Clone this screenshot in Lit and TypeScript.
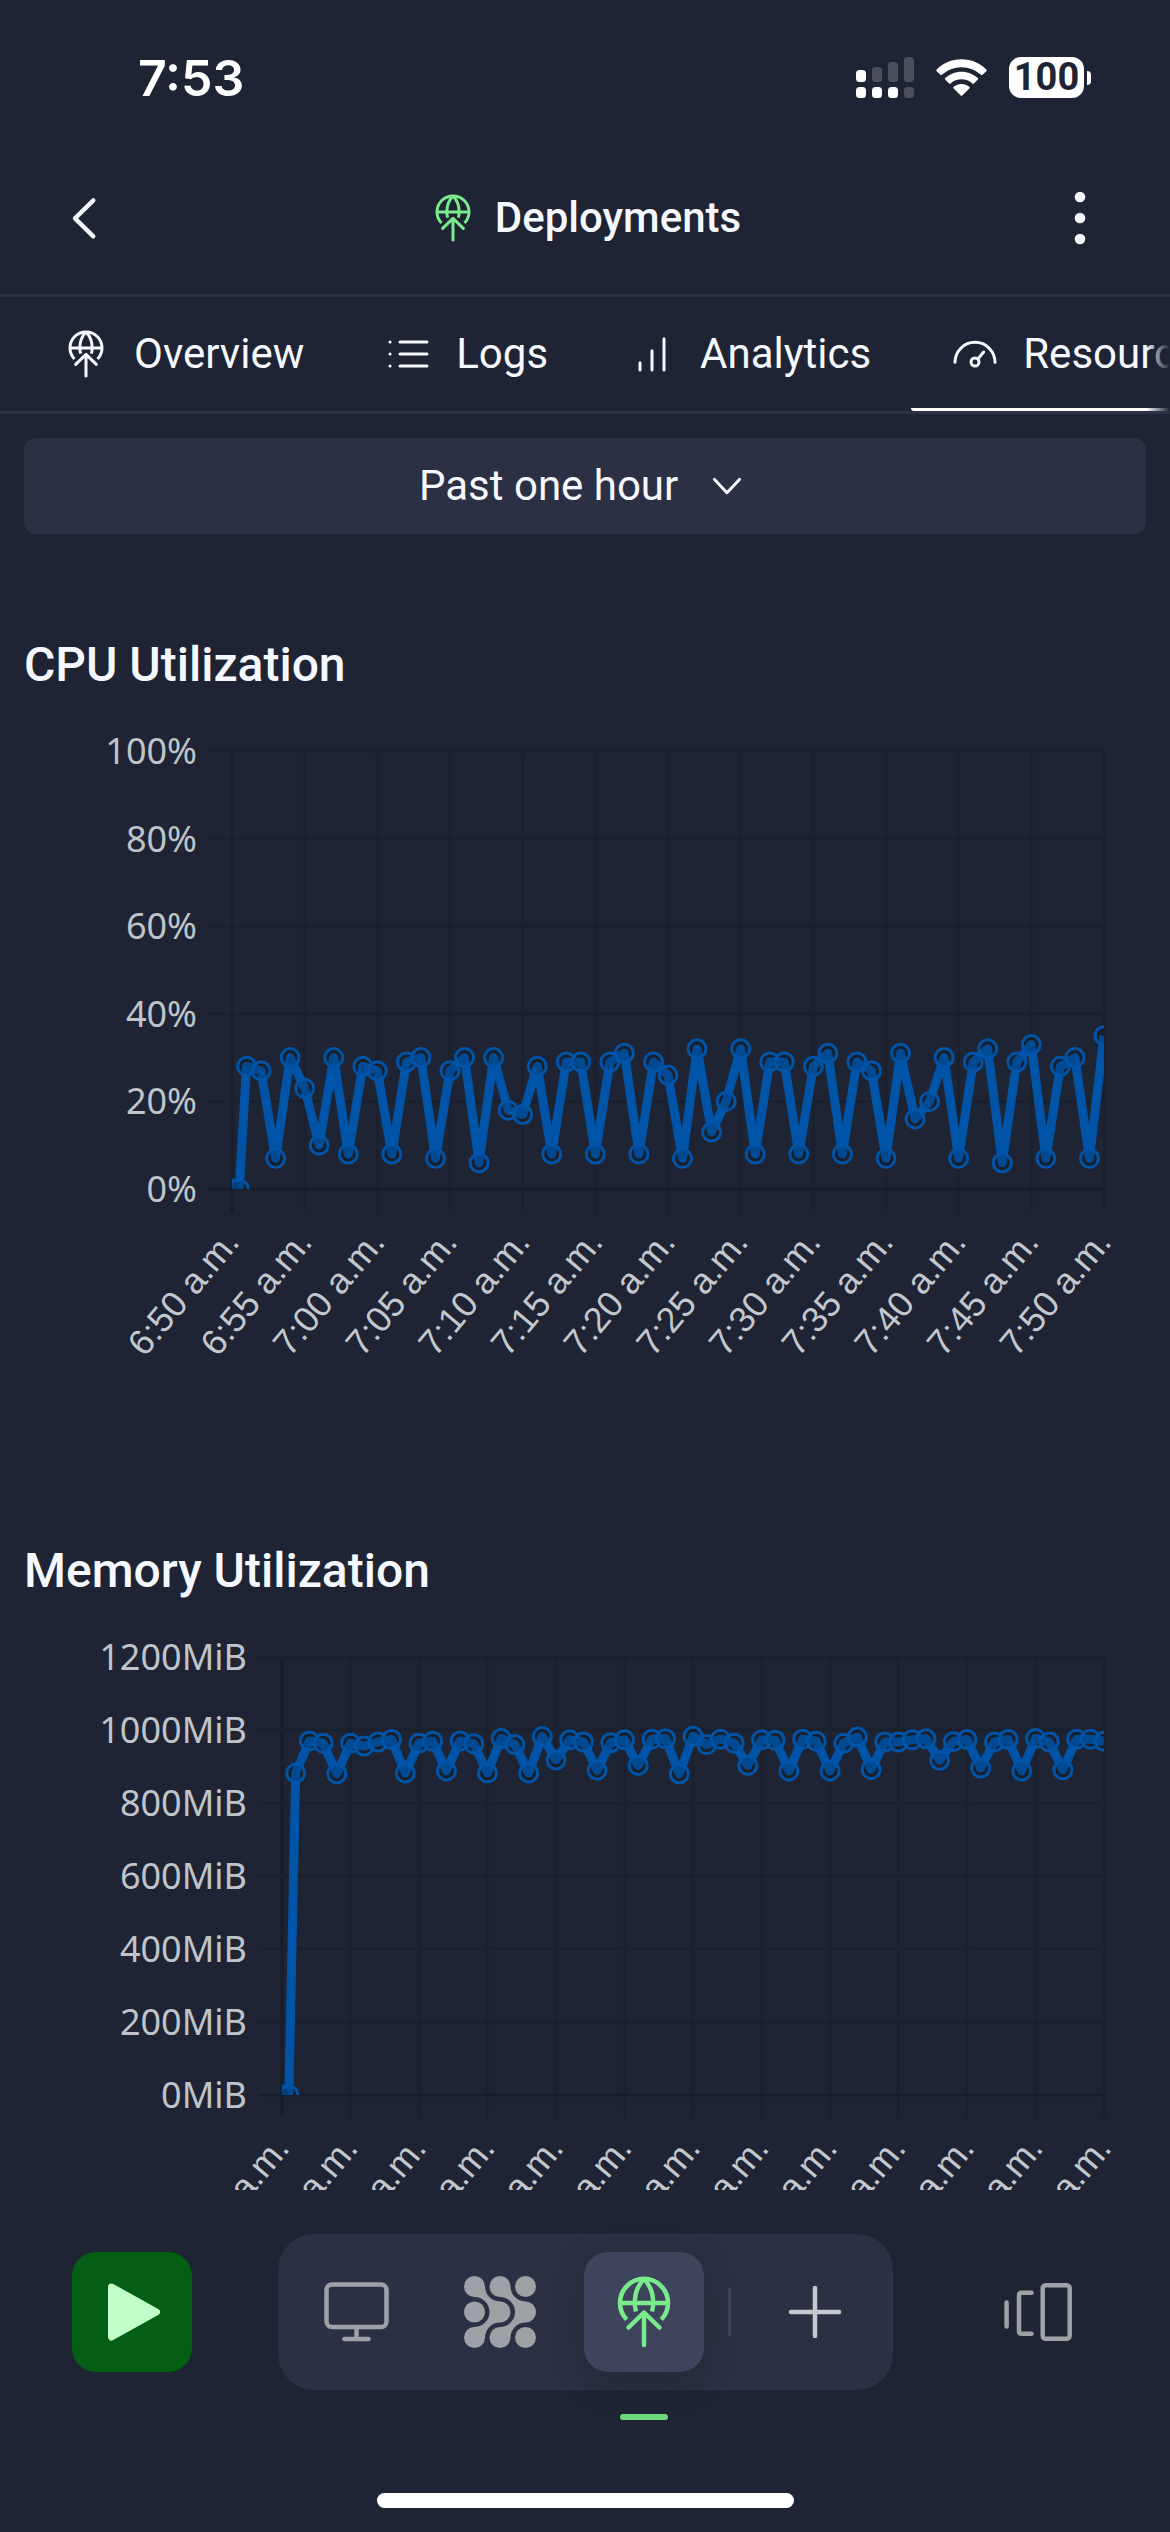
import { LitElement, html, svg, css } from "lit";
import { customElement, property, state } from "lit/decorators.js";
import { classMap } from "lit/directives/class-map.js";

const globeArrow = svg`
  <path d="M18.7 43.5A24 24 0 1 1 53.3 43.5M12 27H60" stroke-linecap="butt"></path>
  <path d="M36 3C30 9 26.8 18 26.8 27Q26.8 31 28 35.500M36 3C42 9 45.200 18 45.200 27Q45.200 31 44 35.500" stroke-linecap="butt"></path>
  <path d="M20.500 51.500L36 36.500L51.500 51.500M36 37V69"></path>`;

const icons = {
  globe: globeArrow,
  list: svg`
    <path d="M24 18H64.500M24 36H64.500M24 54H64.500M9 18h.1M9 36h.1M9 54h.1"></path>`,
  bars: svg`<path d="M18 49V60M36 31V60M54 13V60"></path>`,
  gauge: svg`
    <path d="M6 48.500A30 30 0 0 1 66 48.500"></path>
    <circle cx="36" cy="48" r="6"></circle>
    <path d="M40.500 43L49 33"></path>`,
  monitor: svg`
    <rect x="6.500" y="8.500" width="60" height="42.500" rx="5.500"></rect>
    <path d="M36.500 51V62M24.500 63H48.500"></path>`,
  nodes: svg`
    <g fill="currentColor" stroke="none">
      <path d="M21 10.500A15 15 0 0 0 36 25.500A10.500 10.500 0 0 1 36 46.500A15 15 0 0 0 21 61.500A10.500 10.500 0 1 1 10.500 51A15 15 0 0 0 10.500 21A10.500 10.500 0 1 1 21 10.500Z"></path>
      <path d="M46.500 10.500A15 15 0 0 0 61.500 25.500A10.500 10.500 0 0 1 61.500 46.500A15 15 0 0 0 46.500 61.500A10.500 10.500 0 1 1 36 51A15 15 0 0 0 36 21A10.500 10.500 0 1 1 46.500 10.500Z"></path>
      <circle cx="10.500" cy="36" r="10.500"></circle>
      <circle cx="61.500" cy="10.500" r="10.500"></circle>
      <circle cx="61.500" cy="61.500" r="10.500"></circle>
    </g>`,
  plus: svg`<path d="M36 12V60M12 36H60"></path>`,
  windows: svg`
    <path d="M4.600 26.500V50.500M29.500 16.700H19.500Q17 16.700 17 19.200V55.200Q17 57.700 19.500 57.700H29.500"></path>
    <rect x="40.700" y="9.200" width="27" height="53.600" rx="3"></rect>`,
  play: svg`
    <path d="M15.500 11L60.500 36L15.500 61Z" fill="currentColor" stroke-width="7"></path>`,
  back: svg`<path d="M41 9.500L13.500 36.500L41 63.500" stroke-width="6.500"></path>`,
  dots: svg`
    <g fill="currentColor" stroke="none">
      <circle cx="36" cy="4.500" r="8"></circle>
      <circle cx="36" cy="36" r="8"></circle>
      <circle cx="36" cy="67.500" r="8"></circle>
    </g>`,
  chevron: svg`<path d="M17 26L36 46L55 26"></path>`,
};
type IconName = keyof typeof icons;

const icon = (name: IconName, size = "") => html`
  <svg class="icon ${size}" viewBox="0 0 72 72" aria-hidden="true">${icons[name]}</svg>`;

interface Sample {
  minute: number;
  value: number;
}

// The first half-minute reports nothing; afterwards there is one sample a minute.
const series = (values: number[]): Sample[] => [
  { minute: 0, value: 0 },
  { minute: 0.5, value: 0 },
  ...values.map((value, i) => ({ minute: i + 1, value })),
];

const CPU = series([
  28, 27, 7, 30, 23, 10, 30, 8, 28, 27, 8, 29, 30, 7, 27, 30, 6, 30, 18, 17,
  28, 8, 29, 29, 8, 29, 31, 8, 29, 26, 7, 32, 13, 20, 32, 8, 29, 29, 8, 28,
  31, 8, 29, 27, 7, 31, 16, 20, 30, 7, 29, 32, 6, 29, 33, 7, 28, 30, 7, 35,
]);

const MEMORY = series([
  882, 970, 964, 880, 964, 956, 967, 974, 882, 964, 969, 888, 970, 962, 882,
  977, 960, 882, 982, 918, 973, 967, 890, 965, 973, 903, 975, 976, 880, 983,
  960, 975, 964, 903, 973, 972, 888, 975, 969, 888, 964, 981, 892, 967, 967,
  973, 976, 917, 968, 974, 896, 967, 974, 888, 977, 967, 891, 975, 975, 969,
]);

const timeLabel = (minute: number) => {
  const total = 6 * 60 + 50 + minute;
  return `${Math.floor(total / 60)}:${String(total % 60).padStart(2, "0")} a.m.`;
};

@customElement("usage-chart")
class UsageChart extends LitElement {
  @property({ attribute: false }) samples: Sample[] = [];
  @property({ type: Number }) max = 100;
  @property({ type: Number }) step = 20;
  @property({ type: Number }) left = 232;
  @property() unit = "%";
  @property() label = "";

  static styles = css`
    :host {
      display: block;
    }
    .chart {
      display: block;
      width: 100%;
      overflow: visible;
    }
    .grid {
      stroke: #1a202e;
      stroke-width: 3;
    }
    .axis {
      stroke: #171d2a;
      stroke-width: 3;
    }
    .line {
      fill: none;
      stroke: #0054a8;
      stroke-width: 9;
      stroke-linejoin: round;
    }
    .point {
      fill: rgba(0, 0, 0, 0.12);
      stroke: #0054a8;
      stroke-width: 3;
    }
    .value {
      fill: #bfc4c9;
      font: 36px "Noto Sans", sans-serif;
      text-anchor: end;
    }
    .time {
      fill: #c3c8cc;
      font: 36px "Liberation Sans", Arial, sans-serif;
      text-anchor: end;
    }
  `;

  render() {
    const top = 56;
    const bottom = 494;
    const right = 1104;
    const x = (m: number) => this.left + ((right - this.left) * m) / 60;
    const y = (v: number) => bottom - ((bottom - top) * v) / this.max;
    const rows = Array.from({ length: this.max / this.step + 1 }, (_, i) => i * this.step);
    const columns = Array.from({ length: 13 }, (_, i) => i * 5);
    const path = this.samples.map((s) => `${x(s.minute)},${y(s.value)}`).join(" ");
    return html`
      <svg class="chart" viewBox="0 0 1170 700" role="img" aria-label=${this.label}>
        <clipPath id="area">
          <rect x=${this.left} y="0" width=${right - this.left} height=${bottom}></rect>
        </clipPath>
        ${columns.map(
          (m) => svg`<line class=${m === 0 ? "axis" : "grid"} x1=${x(m)} x2=${x(m)} y1=${top} y2=${bottom + 23}></line>`,
        )}
        ${rows.map(
          (v) => svg`
            <line class=${v === 0 ? "axis" : "grid"} x1=${this.left - 24} x2=${right} y1=${y(v)} y2=${y(v)}></line>
            <text class="value" x=${this.left - 35} y=${y(v) + 13}>${v}${this.unit}</text>`,
        )}
        <g clip-path="url(#area)">
          <polyline class="line" points=${path}></polyline>
          ${this.samples.map(
            (s) => svg`<circle class="point" cx=${x(s.minute)} cy=${y(s.value)} r="9"></circle>`,
          )}
        </g>
        ${columns.map(
          (m) => svg`<text class="time" transform="translate(${x(m) + 9} 548) rotate(-50)">${timeLabel(m)}</text>`,
        )}
      </svg>`;
  }
}

const TABS: { name: string; icon: IconName }[] = [
  { name: "Overview", icon: "globe" },
  { name: "Logs", icon: "list" },
  { name: "Analytics", icon: "bars" },
  { name: "Resources", icon: "gauge" },
];

const DOCK: { name: string; icon: IconName }[] = [
  { name: "Desktop", icon: "monitor" },
  { name: "Networks", icon: "nodes" },
  { name: "Deployments", icon: "globe" },
];

@customElement("app-root")
class AppRoot extends LitElement {
  @state() private tab = "Resources";
  @state() private tool = "Deployments";

  static styles = css`
    :host {
      display: flex;
      flex-direction: column;
      height: 100vh;
      overflow: hidden;
      background: #1e2433;
      color: #f5f8fe;
      font-family: Roboto, "Noto Sans", sans-serif;
      font-size: 42px;
      line-height: 54px;
    }
    * {
      box-sizing: border-box;
    }
    button,
    select {
      margin: 0;
      padding: 0;
      border: 0;
      background: none;
      color: inherit;
      font: inherit;
    }
    .icon {
      display: block;
      width: 72px;
      height: 72px;
      flex: none;
      fill: none;
      stroke: currentColor;
      stroke-width: 4.5;
      stroke-linecap: round;
      stroke-linejoin: round;
      overflow: visible;
    }
    .small {
      width: 48px;
      height: 48px;
    }
    .status {
      display: flex;
      align-items: center;
      justify-content: space-between;
      height: 141px;
      padding: 14px 79px 0 138px;
      flex: none;
      color: #fff;
    }
    .clock {
      font: 600 50px/60px Inter, sans-serif;
    }
    .signals {
      display: flex;
      align-items: center;
      gap: 22px;
    }
    .signals svg {
      display: block;
      fill: currentColor;
    }
    .dim {
      opacity: 0.2;
    }
    .battery {
      display: flex;
      align-items: center;
      gap: 3px;
    }
    .charge {
      width: 75px;
      height: 41px;
      border-radius: 12px;
      background: #fff;
      color: #1e2433;
      font: 700 38px/41px Roboto, sans-serif;
      text-align: center;
    }
    .nub {
      width: 4px;
      height: 14px;
      border-radius: 0 4px 4px 0;
      background: #fff;
    }
    .titlebar {
      display: flex;
      align-items: center;
      justify-content: space-between;
      height: 156px;
      padding: 0 66px;
      flex: none;
      border-bottom: 3px solid #2c3044;
    }
    .title {
      display: flex;
      align-items: center;
      gap: 18px;
      margin: 0;
      font-size: 42px;
      font-weight: 500;
    }
    .accent {
      display: flex;
      color: #7aeb8c;
    }
    .tabs {
      display: flex;
      height: 117px;
      padding: 0 22px;
      flex: none;
      border-bottom: 3px solid #2c3044;
      overflow: hidden;
    }
    .tabs-fade {
      flex: none;
      position: relative;
    }
    .tabs-fade::after {
      content: "";
      position: absolute;
      top: 0;
      right: 0;
      bottom: 3px;
      width: 24px;
      background: linear-gradient(to right, transparent, #1e2433);
    }
    .tab {
      display: flex;
      align-items: center;
      gap: 24px;
      padding: 3px 40px 0;
      flex: none;
      border-bottom: 3px solid transparent;
    }
    .tab.active {
      border-bottom-color: #fff;
      border-radius: 3px;
    }
    .content {
      flex: 1;
      min-height: 0;
      padding-top: 24px;
      overflow-y: auto;
      scrollbar-width: none;
    }
    .range {
      display: flex;
      align-items: center;
      justify-content: center;
      gap: 24px;
      height: 96px;
      margin: 0 24px 101px;
      border-radius: 12px;
      background: #2c3044;
    }
    .range select {
      appearance: none;
      outline: none;
    }
    .panel {
      margin-bottom: 146px;
    }
    .heading {
      margin: 0;
      padding: 0 24px;
      font-size: 48px;
      font-weight: 500;
      line-height: 60px;
    }
    .footer {
      flex: none;
      padding: 44px 72px 24px;
    }
    .dock-row {
      display: flex;
      align-items: center;
      justify-content: space-between;
    }
    .key {
      position: relative;
      display: grid;
      place-items: center;
      width: 120px;
      height: 120px;
      border-radius: 24px;
      color: #9ea2a6;
    }
    .run {
      background: #045f14;
      color: #c0ffca;
    }
    .dock {
      display: flex;
      align-items: center;
      gap: 24px;
      padding: 18px;
      border-radius: 36px;
      background: #2c3044;
    }
    .key.active {
      background: #3d445b;
      color: #7aeb8c;
      box-shadow: 0 9px 30px rgba(20, 24, 36, 0.4);
    }
    .key.active::after {
      content: "";
      position: absolute;
      top: 162px;
      left: 36px;
      width: 48px;
      height: 6px;
      border-radius: 3px;
      background: #6bd97c;
    }
    .divider {
      width: 3px;
      height: 48px;
      background: #3d445b;
    }
    .add {
      color: #c5c8cc;
    }
    .home {
      width: 417px;
      height: 15px;
      margin: 103px auto 0;
      border-radius: 8px;
      background: #fff;
    }
  `;

  private statusBar() {
    return html`
      <div class="status">
        <span class="clock">7:53</span>
        <div class="signals">
          <svg width="58" height="41" viewBox="0 0 58 41" aria-hidden="true">
            <rect x="0" y="13" width="10" height="12" rx="3.500"></rect>
            <rect class="dim" x="16" y="10" width="10" height="15" rx="3.500"></rect>
            <rect class="dim" x="32" y="5" width="10" height="20" rx="3.500"></rect>
            <rect class="dim" x="48" y="0" width="10" height="25" rx="3.500"></rect>
            <rect x="0" y="30" width="10" height="11" rx="3.500"></rect>
            <rect x="16" y="30" width="10" height="11" rx="3.500"></rect>
            <rect x="32" y="30" width="10" height="11" rx="3.500"></rect>
            <rect class="dim" x="48" y="30" width="10" height="11" rx="3.500"></rect>
          </svg>
          <svg width="51" height="38" viewBox="0 0 52 38" aria-hidden="true">
            <path d="M26 0C36 0 45 4 51.300 10.300Q52 11.200 51.300 12L47.500 15.800Q46.700 16.500 45.900 15.800C40.500 10.800 33.500 8 26 8C18.500 8 11.500 10.800 6.100 15.800Q5.300 16.500 4.500 15.800L.7 12Q0 11.200 .7 10.300C7 4 16 0 26 0Z"></path>
            <path d="M26 12.500C32.500 12.500 38.300 15 42.600 19Q43.400 19.800 42.600 20.600L38.700 24.500Q37.900 25.200 37.100 24.500C34 21.800 30.200 20.300 26 20.300C21.800 20.300 18 21.800 14.900 24.500Q14.100 25.200 13.300 24.500L9.400 20.600Q8.600 19.800 9.400 19C13.700 15 19.500 12.500 26 12.500Z"></path>
            <path d="M26 25C29 25 31.800 26.100 34 28Q34.800 28.800 34 29.600L26.800 36.900Q26 37.600 25.200 36.900L18 29.600Q17.200 28.800 18 28C20.200 26.100 23 25 26 25Z"></path>
          </svg>
          <div class="battery"><span class="charge">100</span><span class="nub"></span></div>
        </div>
      </div>`;
  }

  render() {
    return html`
      ${this.statusBar()}
      <header class="titlebar">
        <button aria-label="Back">${icon("back", "small")}</button>
        <h1 class="title"><span class="accent">${icon("globe", "small")}</span>Deployments</h1>
        <button aria-label="More options">${icon("dots", "small")}</button>
      </header>
      <div class="tabs-fade">
        <nav class="tabs">
          ${TABS.map(
            (t) => html`
              <button
                class=${classMap({ tab: true, active: t.name === this.tab })}
                @click=${() => (this.tab = t.name)}
              >
                ${icon(t.icon, "small")}<span>${t.name}</span>
              </button>`,
          )}
        </nav>
      </div>
      <main class="content">
        <div class="range">
          <select id="range" aria-label="Time range">
            <option>Past one hour</option>
            <option>Past 6 hours</option>
            <option>Past day</option>
          </select>
          ${icon("chevron", "small")}
        </div>
        <section class="panel">
          <h2 class="heading">CPU Utilization</h2>
          <usage-chart label="CPU Utilization" .samples=${CPU}></usage-chart>
        </section>
        <section class="panel">
          <h2 class="heading">Memory Utilization</h2>
          <usage-chart
            label="Memory Utilization"
            unit="MiB"
            max="1200"
            step="200"
            left="282"
            .samples=${MEMORY}
          ></usage-chart>
        </section>
      </main>
      <footer class="footer">
        <div class="dock-row">
          <button class="key run" aria-label="Run">${icon("play")}</button>
          <div class="dock">
            ${DOCK.map(
              (d) => html`
                <button
                  class=${classMap({ key: true, active: d.name === this.tool })}
                  aria-label=${d.name}
                  @click=${() => (this.tool = d.name)}
                >
                  ${icon(d.icon)}
                </button>`,
            )}
            <span class="divider"></span>
            <button class="key add" aria-label="Add tool">${icon("plus")}</button>
          </div>
          <button class="key" aria-label="Open tools">${icon("windows")}</button>
        </div>
        <div class="home"></div>
      </footer>`;
  }
}
